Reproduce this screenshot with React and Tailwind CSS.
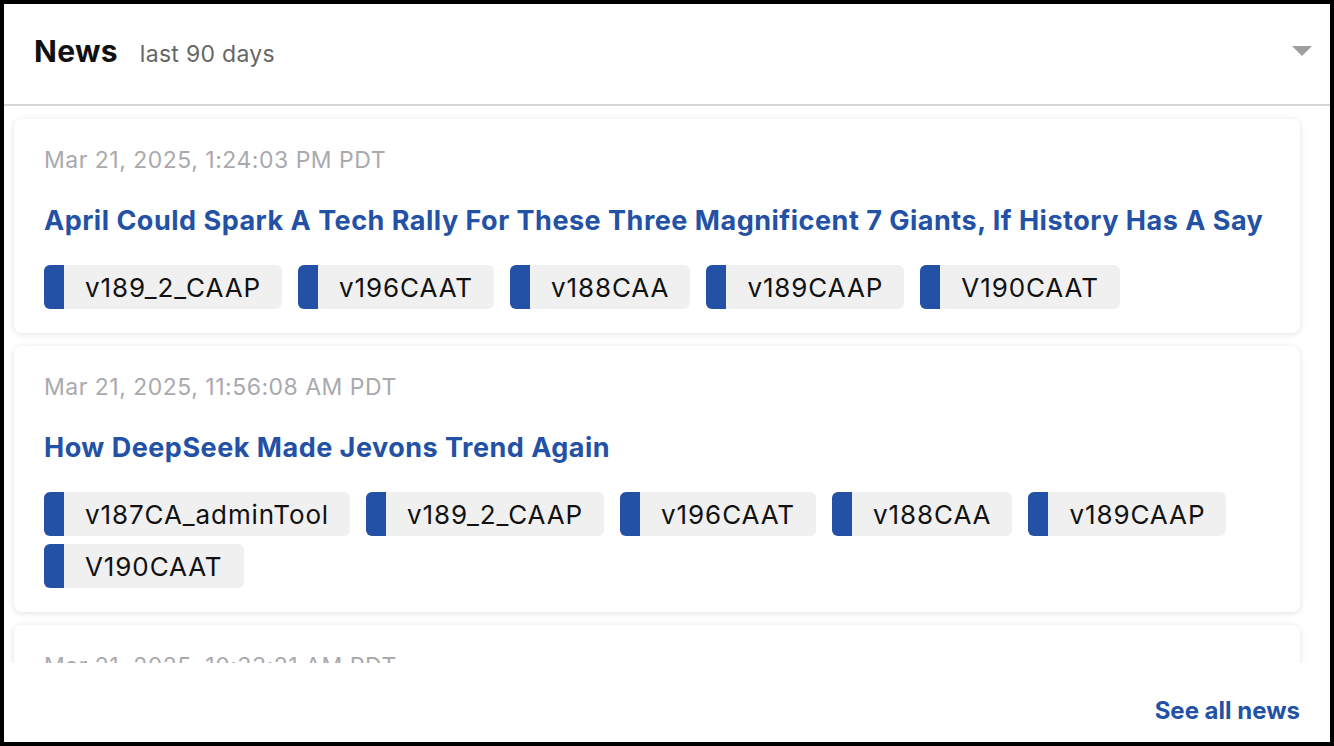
import React from "react";

const news = [
  {
    date: "Mar 21, 2025, 1:24:03 PM PDT",
    title:
      "April Could Spark A Tech Rally For These Three Magnificent 7 Giants, If History Has A Say",
    tags: ["v189_2_CAAP", "v196CAAT", "v188CAA", "v189CAAP", "V190CAAT"],
  },
  {
    date: "Mar 21, 2025, 11:56:08 AM PDT",
    title: "How DeepSeek Made Jevons Trend Again",
    tags: [
      "v187CA_adminTool",
      "v189_2_CAAP",
      "v196CAAT",
      "v188CAA",
      "v189CAAP",
      "V190CAAT",
    ],
  },
  {
    date: "Mar 21, 2025, 10:33:21 AM PDT",
    title: "Nvidia Stock Slides As Investors Weigh Tariff Risks",
    tags: ["v189_2_CAAP", "v196CAAT", "v188CAA"],
  },
];

const Tag = ({ label }) => (
  <span className="flex h-[44px] items-stretch rounded-[6px] bg-[#f0f0f0]">
    <span className="w-[20px] rounded-l-[6px] bg-[#2251a6]" />
    <span className="flex items-center px-[21px] text-[26px] tracking-[0.9px] text-[#111]">
      {label}
    </span>
  </span>
);

const NewsCard = ({ item }) => (
  <div className="rounded-[8px] bg-white px-[30px] pt-[25px] pb-[24px] shadow-[0_1px_6px_rgba(0,0,0,0.12)]">
    <div className="text-[23px] leading-[32px] tracking-[0.5px] text-[#a9a9ae]">
      {item.date}
    </div>
    <a
      href="#"
      className="mt-[27px] block text-[27px] font-bold leading-[36px] tracking-[0.5px] text-[#2251a6]"
    >
      {item.title}
    </a>
    <div className="mt-[26px] flex flex-wrap gap-x-[16px] gap-y-[8px]">
      {item.tags.map((t, i) => (
        <Tag key={i} label={t} />
      ))}
    </div>
  </div>
);

export default function App() {
  return (
    <div
      className="flex h-[746px] w-[1334px] flex-col border-4 border-black bg-white"
      style={{ fontFamily: "Inter, 'Noto Sans', sans-serif" }}
    >
      {/* Header */}
      <div className="flex h-[102px] shrink-0 items-center justify-between border-b-2 border-[#d6d6d6] pb-[6px] pl-[30px] pr-[18px]">
        <div className="flex items-baseline gap-[22px]">
          <span className="text-[30px] font-bold tracking-[0.3px] text-[#111]">News</span>
          <span className="text-[23px] tracking-[0.3px] text-[#666]">last 90 days</span>
        </div>
        <svg width="20" height="10" viewBox="0 0 20 10">
          <path d="M0 0 H20 L10 10 Z" fill="#9e9e9e" />
        </svg>
      </div>

      {/* List */}
      <div className="h-[557px] shrink-0 overflow-hidden">
        <div className="flex flex-col gap-[13px] pt-[13px] pl-[10px] pr-[30px]">
          {news.map((item, i) => (
            <NewsCard key={i} item={item} />
          ))}
        </div>
      </div>

      {/* Footer */}
      <div className="flex flex-1 items-center justify-end pr-[30px] pt-[16px]">
        <a href="#" className="text-[24px] font-bold text-[#2251a6]">
          See all news
        </a>
      </div>
    </div>
  );
}
